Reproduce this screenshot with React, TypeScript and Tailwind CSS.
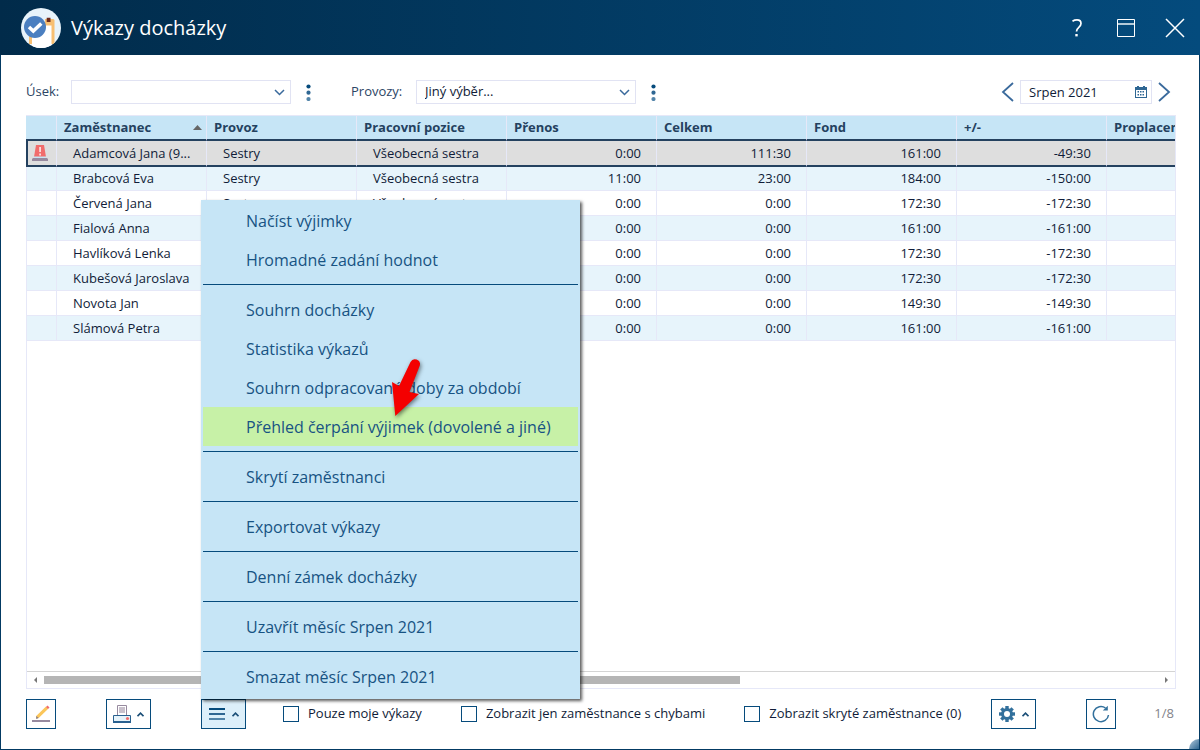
import React, { useState } from "react";

interface Employee {
    name: string;
    department: string;
    position: string;
    carry: string;
    total: string;
    fund: string;
    diff: string;
}

const employees: Employee[] = [
    { name: "Adamcová Jana (9...", department: "Sestry", position: "Všeobecná sestra", carry: "0:00", total: "111:30", fund: "161:00", diff: "-49:30" },
    { name: "Brabcová Eva", department: "Sestry", position: "Všeobecná sestra", carry: "11:00", total: "23:00", fund: "184:00", diff: "-150:00" },
    { name: "Červená Jana", department: "Sestry", position: "Všeobecná sestra", carry: "0:00", total: "0:00", fund: "172:30", diff: "-172:30" },
    { name: "Fialová Anna", department: "", position: "", carry: "0:00", total: "0:00", fund: "161:00", diff: "-161:00" },
    { name: "Havlíková Lenka", department: "", position: "", carry: "0:00", total: "0:00", fund: "172:30", diff: "-172:30" },
    { name: "Kubešová Jaroslava", department: "", position: "", carry: "0:00", total: "0:00", fund: "172:30", diff: "-172:30" },
    { name: "Novota Jan", department: "", position: "", carry: "0:00", total: "0:00", fund: "149:30", diff: "-149:30" },
    { name: "Slámová Petra", department: "", position: "", carry: "0:00", total: "0:00", fund: "161:00", diff: "-161:00" },
];

const columns = ["Zaměstnanec", "Provoz", "Pracovní pozice", "Přenos", "Celkem", "Fond", "+/-", "Proplaceno"];

const menuGroups = [
    ["Načíst výjimky", "Hromadné zadání hodnot"],
    ["Souhrn docházky", "Statistika výkazů", "Souhrn odpracované doby za období", "Přehled čerpání výjimek (dovolené a jiné)"],
    ["Skrytí zaměstnanci"],
    ["Exportovat výkazy"],
    ["Denní zámek docházky"],
    ["Uzavřít měsíc Srpen 2021"],
    ["Smazat měsíc Srpen 2021"],
];

const activeItem = "Přehled čerpání výjimek (dovolené a jiné)";

const Logo = () => (
    <svg className="h-10 w-10" viewBox="0 0 40 40">
        <clipPath id="logo-clip">
            <circle cx="20" cy="20" r="20" />
        </clipPath>
        <g clipPath="url(#logo-clip)">
            <rect width="40" height="40" fill="#e8f3fa" />
            <path d="M8 14h16v-3h8.500l1 1v24H8z" fill="#f7bf72" />
            <path d="M11 17.500h19.500V40H11z" fill="#fff" />
            <path d="M25.700 9.700h3.800V14h-3.800z" fill="#6b2a1c" />
            <circle cx="14" cy="19" r="11" fill="#4b7fc0" />
            <path d="M8 19l4.300 4 8-7.500" fill="none" stroke="#fff" strokeWidth="3.500" />
        </g>
    </svg>
);

const Chevron = ({ className }: { className: string }) => (
    <svg className={className} viewBox="0 0 11 7" fill="none" stroke="#3a6a9c" strokeWidth="1.500">
        <path d="M1 1l4.500 4.500L10 1" />
    </svg>
);

const CaretUp = () => (
    <svg className="h-[5px] w-[7px]" viewBox="0 0 7 5" fill="none" stroke="#1b4f78" strokeWidth="1.700">
        <path d="M.5 4.200l3-3 3 3" />
    </svg>
);

const Dots = ({ label }: { label: string }) => (
    <button type="button" aria-label={label} className="flex h-6 w-[15px] items-center justify-center">
        <svg className="h-[17px] w-[5px]" viewBox="0 0 5 17">
            <circle cx="2.500" cy="2.500" r="2.100" fill="#064b7c" />
            <circle cx="2.500" cy="8.700" r="2.100" fill="#2f6793" />
            <circle cx="2.500" cy="15" r="2.100" fill="#5284a9" />
        </svg>
    </button>
);

const Alarm = () => (
    <svg className="ml-1 block h-4 w-4" viewBox="0 0 16 16">
        <path d="M4 0h8l2 12H2z" fill="#f16c6c" />
        <path d="M7.200 2h1.800v5H7.200zM7.200 8.500h1.800v2H7.200z" fill="#fbdcdc" />
        <path d="M2 11.500h12v1.500H2z" fill="#c5e5f5" />
        <path d="M1 13h14l1 1v2H0v-2z" fill="#978a9f" />
    </svg>
);

const PencilIcon = () => (
    <svg className="h-[18px] w-[18px]" viewBox="0 0 18 18">
        <path d="M4.500 13.500l-.3-2.500L14 1.600l2.200 2.200L6.700 13z" fill="#fbc65a" />
        <path d="M4.200 11l2.500 2-2.500 1z" fill="#877b86" />
        <path d="M14 2l1.500-1.500 2 2L16 4z" fill="#f16c6c" />
        <path d="M0 15h18v2H0z" fill="#978a9f" />
    </svg>
);

const PrinterIcon = () => (
    <svg className="h-[18px] w-[18px]" viewBox="0 0 18 18">
        <path d="M4.500.5h9v10h-9z" fill="#fff" stroke="#978a9f" />
        <path d="M6 2h6v6H6z" fill="#c9c1cc" />
        <path d="M.5 10.500h17v6.500H.5z" fill="#e6f3fa" stroke="#28608f" />
        <path d="M0 16h18v2H0z" fill="#28608f" />
        <circle cx="14.500" cy="13.500" r="1.600" fill="#f16c6c" />
    </svg>
);

const LinesIcon = () => (
    <svg className="h-3 w-4" viewBox="0 0 16 12">
        <path d="M0 0h16v2H0z" fill="#064b7c" />
        <path d="M0 5h16v2H0z" fill="#2f6793" />
        <path d="M0 10h16v2H0z" fill="#5284a9" />
    </svg>
);

const GearIcon = () => (
    <svg className="h-4 w-4" viewBox="0 0 16 16">
        <g fill="#32709c">
            {[0, 45, 90, 135].map((angle) => (
                <rect key={angle} x="6.300" y="0" width="3.400" height="16" transform={`rotate(${angle} 8 8)`} />
            ))}
            <circle cx="8" cy="8" r="6" />
        </g>
        <circle cx="8" cy="8" r="3" fill="#fff" />
    </svg>
);

const RefreshIcon = () => (
    <svg className="h-[18px] w-[18px]" viewBox="0 0 18 18" fill="none" stroke="#32709c" strokeWidth="1.500">
        <path d="M16.500 10A7.600 7.600 0 1 1 13.500 3" />
        <path d="M15.800.8v4.600h-5z" fill="#32709c" stroke="none" />
    </svg>
);

const CalendarIcon = () => (
    <svg className="absolute right-[5px] h-3 w-3" viewBox="0 0 12 12" fill="#2f6793">
        <path d="M2 0h2v1H2zM8 0h2v1H8z" />
        <path d="M0 1h12v11H0zM1 4v7h10V4z" fillRule="evenodd" />
        <path d="M5 5h1.500v1.500H5zM7.500 5H9v1.500H7.500zM2.500 8H4v1.500H2.500zM5 8h1.500v1.500H5zM7.500 8H9v1.500H7.500zM2.500 5H4v1.500H2.500z" />
    </svg>
);

const toolButton = "flex h-[30px] items-center justify-center border border-[#064b7c]";
const headCell = "border-t border-r border-b-2 border-t-[#e6e8f8] border-r-[#e6e8f8] border-b-[#24415f]";
const cell = "truncate border-r border-b border-[#e6e8f8] pb-px";

const MainMenu: React.FC = () => (
    <div role="menu" className="absolute bottom-full left-0 z-10 w-[379px] bg-[#c6e5f6] px-[2px] pt-px pb-[3px] text-left shadow-[2px_2px_3px_rgba(0,0,0,0.65)]">
        {menuGroups.map((group, i) => (
            <div key={i}>
                {i > 0 && <hr className="my-[5px] border-[#064b7c]" />}
                {group.map((item) => (
                    <button
                        key={item}
                        type="button"
                        role="menuitem"
                        className={`block h-[39px] w-full pl-[43px] text-left text-base text-[#175383] ${item === activeItem ? "bg-[#c7f1a7]" : ""}`}
                    >
                        {item}
                    </button>
                ))}
            </div>
        ))}
        <svg className="pointer-events-none absolute top-[155px] left-[187px] h-[70px] w-10 drop-shadow-[1px_2px_2px_rgba(0,0,0,0.5)]" viewBox="0 0 40 70">
            <path d="M7.300 61L4 27l7 4L22.500 7a5 5 0 0 1 9.300 3.500L21.500 37l9.500 2z" fill="#f40000" />
        </svg>
    </div>
);

const CheckOption = ({ label }: { label: string }) => (
    <label className="flex items-center gap-[9px] whitespace-nowrap">
        <input type="checkbox" className="h-4 w-4 appearance-none border border-[#064b7c] bg-white checked:bg-[#064b7c]" />
        {label}
    </label>
);

const App: React.FC = () => {
    const [menuOpen, setMenuOpen] = useState<boolean>(true);

    return (
        <div className="flex h-screen flex-col overflow-hidden bg-white font-['Open_Sans','Noto_Sans',sans-serif] text-[13px] text-[#101c38]">
            <header className="flex h-[55px] shrink-0 items-center bg-linear-to-r from-[#012b4a] to-[#044b7d] pr-[15px] pl-[21px] text-white">
                <Logo />
                <h1 className="ml-[10px] text-xl">Výkazy docházky</h1>
                <div className="ml-auto flex items-center gap-[30px]">
                    <button type="button" aria-label="Nápověda" className="w-5">
                        <svg className="mx-auto h-[18px] w-3" viewBox="0 0 12 18" fill="none" stroke="#fff" strokeWidth="1.700">
                            <path d="M1.500 2.200Q3.500.9 6 .9q4 0 4 3.600 0 2-2.200 3.800T5.500 12.500" />
                            <path d="M4.300 15h2.400v2.400H4.300z" fill="#fff" stroke="none" />
                        </svg>
                    </button>
                    <button type="button" aria-label="Maximalizovat">
                        <svg className="h-[18px] w-[18px]" viewBox="0 0 18 18" fill="none" stroke="#fff">
                            <path d="M.5.500h17v17H.5z" />
                            <path d="M1 5h16" strokeWidth="2" stroke="#b4cad8" />
                        </svg>
                    </button>
                    <button type="button" aria-label="Zavřít">
                        <svg className="h-5 w-5" viewBox="0 0 20 20" fill="none" stroke="#fff" strokeWidth="1.500">
                            <path d="M1 1l18 18M19 1L1 19" />
                        </svg>
                    </button>
                </div>
            </header>

            <main className="relative flex min-h-0 flex-1 flex-col border border-t-0 border-[#033a63] pt-[25px] pr-[23px] pb-5 pl-[25px]">
                <div className="flex h-6 shrink-0 items-center">
                    <label htmlFor="section" className="w-[45px] text-[#2c4565]">Úsek:</label>
                    <div className="relative flex items-center">
                        <select id="section" className="h-6 w-[220px] appearance-none border border-[#e1e3f3] bg-white px-2">
                            <option></option>
                        </select>
                        <Chevron className="pointer-events-none absolute right-[6px] h-[7px] w-[11px]" />
                    </div>
                    <div className="ml-[10px]"><Dots label="Možnosti úseku" /></div>
                    <label htmlFor="place" className="ml-[35px] w-[65px] text-[#2c4565]">Provozy:</label>
                    <div className="relative flex items-center">
                        <select id="place" className="h-6 w-[220px] appearance-none border border-[#e1e3f3] bg-white px-2">
                            <option>Jiný výběr...</option>
                        </select>
                        <Chevron className="pointer-events-none absolute right-[6px] h-[7px] w-[11px]" />
                    </div>
                    <div className="ml-[10px]"><Dots label="Možnosti provozů" /></div>
                    <div className="mr-[5px] ml-auto flex items-center gap-[6px]">
                        <button type="button" aria-label="Předchozí měsíc">
                            <svg className="h-5 w-[13px]" viewBox="0 0 13 20" fill="none" stroke="#3a6a9c" strokeWidth="1.800">
                                <path d="M12 1L2 10l10 9" />
                            </svg>
                        </button>
                        <div className="relative flex items-center">
                            <input aria-label="Měsíc" defaultValue="Srpen 2021" className="h-6 w-[132px] border border-[#e1e3f3] px-2" />
                            <CalendarIcon />
                        </div>
                        <button type="button" aria-label="Další měsíc">
                            <svg className="h-5 w-[13px]" viewBox="0 0 13 20" fill="none" stroke="#3a6a9c" strokeWidth="1.800">
                                <path d="M1 1l10 9-10 9" />
                            </svg>
                        </button>
                    </div>
                </div>

                <div className="relative mt-[11px] flex min-h-0 flex-1 flex-col border border-t-0 border-[#e6e8f8]">
                    <div className="-ml-px min-h-0 flex-1 overflow-hidden">
                        <table className="w-[1231px] table-fixed border-separate border-spacing-0">
                            <colgroup>
                                <col className="w-[31px]" />
                                {columns.map((c) => (
                                    <col key={c} className="w-[150px]" />
                                ))}
                            </colgroup>
                            <thead>
                                <tr className="h-[26px] bg-[#c6e5f6] text-left text-[#24415f]">
                                    <th aria-label="Stav" className={headCell}></th>
                                    {columns.map((c, i) => (
                                        <th key={c} className={`${headCell} pb-px pl-[7px] leading-5 font-bold`}>
                                            <div className="flex items-center justify-between pr-1">
                                                {c}
                                                {i === 0 && (
                                                    <svg className="h-[5px] w-[9px]" viewBox="0 0 9 5" fill="#666">
                                                        <path d="M0 5l4.500-5L9 5z" />
                                                    </svg>
                                                )}
                                            </div>
                                        </th>
                                    ))}
                                </tr>
                            </thead>
                            <tbody className="leading-5">
                                {employees.map((e, i) => {
                                    const line = i === 0 ? "border-b-2 border-b-[#24415f]" : "";
                                    return (
                                        <tr
                                            key={e.name}
                                            className={i === 0 ? "h-[26px] bg-[#dedede]" : i === 1 ? "h-6 bg-[#e7f4fb]" : i % 2 ? "h-[25px] bg-[#e7f4fb]" : "h-[25px] bg-white"}
                                        >
                                            <td className={`${cell} ${line} ${i === 0 ? "border-l-2 border-l-[#24415f]" : "border-l"}`}>{i === 0 && <Alarm />}</td>
                                            <td className={`${cell} ${line} pl-4`}>{e.name}</td>
                                            <td className={`${cell} ${line} pl-4`}>{e.department}</td>
                                            <td className={`${cell} ${line} pl-4`}>{e.position}</td>
                                            <td className={`${cell} ${line} pr-[15px] text-right`}>{e.carry}</td>
                                            <td className={`${cell} ${line} pr-[15px] text-right`}>{e.total}</td>
                                            <td className={`${cell} ${line} pr-[15px] text-right`}>{e.fund}</td>
                                            <td className={`${cell} ${line} pr-[15px] text-right`}>{e.diff}</td>
                                            <td className={`${cell} ${line}`}></td>
                                        </tr>
                                    );
                                })}
                            </tbody>
                        </table>
                    </div>
                    {/* horizontal scrollbar */}
                    <div className="flex h-[17px] shrink-0 items-center border-t border-[#d4d4d4] px-[7px]">
                        <svg className="h-[6px] w-[3px]" viewBox="0 0 3 6" fill="#777"><path d="M3 0v6L0 3z" /></svg>
                        <div className="mx-[7px] h-2 flex-1">
                            <div className="h-2 w-5/8 bg-[#b5b5b5]"></div>
                        </div>
                        <svg className="h-[6px] w-[3px]" viewBox="0 0 3 6" fill="#777"><path d="M0 0v6l3-3z" /></svg>
                    </div>
                </div>

                <div className="mt-[10px] flex h-[30px] shrink-0 items-center">
                    <button type="button" aria-label="Upravit" className={`${toolButton} w-[30px]`}>
                        <PencilIcon />
                    </button>
                    <button type="button" aria-label="Tisk" className={`${toolButton} ml-[50px] w-[45px] gap-[6px]`}>
                        <PrinterIcon />
                        <CaretUp />
                    </button>
                    <div className="relative ml-[50px]">
                        <button
                            type="button"
                            aria-label="Nabídka"
                            aria-expanded={menuOpen}
                            onClick={() => setMenuOpen(!menuOpen)}
                            className={`${toolButton} w-[45px] gap-[7px] bg-[#dceffa]`}
                        >
                            <LinesIcon />
                            <CaretUp />
                        </button>
                        {menuOpen && <MainMenu />}
                    </div>
                    <div className="ml-[37px] flex gap-[39px]">
                        <CheckOption label="Pouze moje výkazy" />
                        <CheckOption label="Zobrazit jen zaměstnance s chybami" />
                        <CheckOption label="Zobrazit skryté zaměstnance (0)" />
                    </div>
                    <button type="button" aria-label="Nastavení" className={`${toolButton} ml-auto w-[45px] gap-[7px]`}>
                        <GearIcon />
                        <CaretUp />
                    </button>
                    <button type="button" aria-label="Obnovit" className={`${toolButton} ml-[50px] w-[30px]`}>
                        <RefreshIcon />
                    </button>
                    <span className="w-[60px] pr-[2px] text-right text-[#83838a]">1/8</span>
                </div>
                <span className="absolute right-0 bottom-0 h-[10px] w-[10px] rounded-tl-full bg-linear-to-br from-[#b9cfde] to-[#2c6690]"></span>
            </main>
        </div>
    );
};

export default App;
